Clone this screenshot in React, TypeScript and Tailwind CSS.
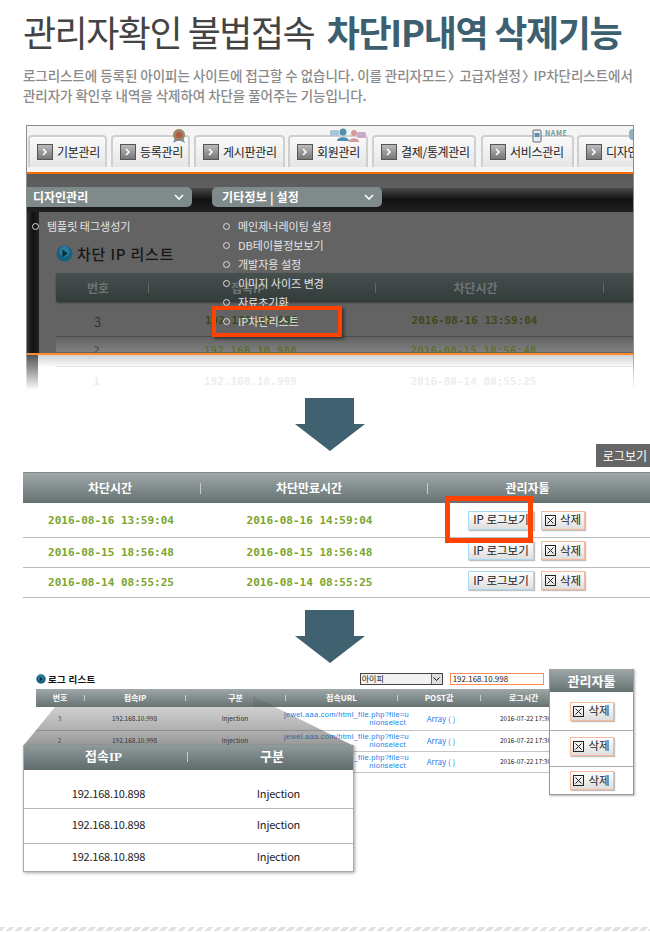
import type { ReactNode } from 'react'

const tabs = [
  { label: '기본관리', w: 'w-[79px]', ml: 'ml-[1px]' },
  { label: '등록관리', w: 'w-[79px]', ml: 'ml-[4px]' },
  { label: '게시판관리', w: 'w-[91px]', ml: 'ml-[4px]' },
  { label: '회원관리', w: 'w-[80px]', ml: 'ml-[3px]' },
  { label: '결제/통계관리', w: 'w-[104px]', ml: 'ml-[4px]' },
  { label: '서비스관리', w: 'w-[93px]', ml: 'ml-[5px]' },
  { label: '디자인관리', w: 'w-[93px]', ml: 'ml-[3px]' },
]

const rightMenu = ['메인제너레이팅 설정', 'DB테이블정보보기', '개발자용 설정', '이미지 사이즈 변경', '자료초기화', 'IP차단리스트']

const blocked = [
  ['2016-08-16 13:59:04', '2016-08-16 14:59:04'],
  ['2016-08-15 18:56:48', '2016-08-15 18:56:48'],
  ['2016-08-14 08:55:25', '2016-08-14 08:55:25'],
]

const logRows = [
  { no: '3', h: 'h-[24px]' },
  { no: '2', h: 'h-[21px]' },
  { no: '1', h: 'h-[21px]' },
]

const toolRows = ['h-[39px] border-b', 'h-[36px] border-b pb-[5px]', 'h-[27px]']

const cropRows = ['h-[39px] border-b pt-[9px]', 'h-[35px] border-b pb-[3px]', 'h-[27px] pb-[3px]']

function Chevron() {
  return (
    <svg width="10" height="6" viewBox="0 0 10 6" className="shrink-0">
      <path d="M1 1l4 4 4-4" fill="none" stroke="#fff" strokeWidth="1.6" />
    </svg>
  )
}

function TabIcon() {
  return (
    <span className="flex h-[16px] w-[16px] shrink-0 items-center justify-center border border-[#555] bg-gradient-to-b from-[#bbb] to-[#777]">
      <svg width="8" height="8" viewBox="0 0 8 8">
        <path d="M2 1l3 3-3 3" fill="none" stroke="#fff" strokeWidth="1.6" />
      </svg>
    </span>
  )
}

function XBox() {
  return (
    <svg width="11" height="11" viewBox="0 0 11 11" className="shrink-0">
      <rect x="0.5" y="0.5" width="10" height="10" fill="none" stroke="#222" />
      <path d="M2.5 2.5l6 6M8.5 2.5l-6 6" stroke="#222" />
    </svg>
  )
}

function RoundIcon({ size }: { size: number }) {
  return (
    <svg width={size} height={size} viewBox="0 0 16 16" className="shrink-0">
      <circle cx="8" cy="8" r="7.5" fill="#14607f" />
      <circle cx="8" cy="6" r="5" fill="#3a8fb0" opacity="0.55" />
      <path d="M6 4.5L11 8l-5 3.5z" fill="#0c2c3c" />
    </svg>
  )
}

function Arrow({ className }: { className: string }) {
  return (
    <svg width="70" height="53" viewBox="0 0 70 53" className={className}>
      <path d="M10 0h49v26h11L35 53 0 26h10z" fill="#3f6170" />
    </svg>
  )
}

function Bullet() {
  return <span className="h-[7px] w-[7px] shrink-0 rounded-full border-[1.5px] border-[#ddd]" />
}

function Divider({ className = 'h-[11px] bg-[#c5cccc]' }: { className?: string }) {
  return <span className={`w-px shrink-0 ${className}`} />
}

function SmallBtn({ children, tone }: { children: ReactNode; tone: 'blue' | 'orange' }) {
  return (
    <span
      className={`flex h-[19px] items-center justify-center gap-[4px] border bg-gradient-to-b from-white to-[#dedede] text-[11.5px] leading-none text-[#222] shadow-[1px_1px_1px_rgba(0,0,0,0.25)] ${
        tone === 'blue' ? 'w-[66px] border-[#a9d9f2]' : 'w-[44px] border-[#f6b99b]'
      }`}
    >
      {children}
    </span>
  )
}

function AdminScreen() {
  return (
    <div className="relative ml-[26px] h-[265px] w-[608px] border-t border-[#8c8c8c]">
      <span className="absolute inset-y-0 left-0 w-px bg-[linear-gradient(#8c8c8c_85%,#fff)]" />
      <span className="absolute inset-y-0 right-0 w-px bg-[linear-gradient(#8c8c8c_85%,#fff)]" />
      <div className="relative mx-px flex h-full flex-col overflow-hidden">
        <div className="relative flex h-[46px] shrink-0 items-end overflow-hidden bg-[#f4f4f4] pb-[5px]">
          {tabs.map((t) => (
            <div
              key={t.label}
              className={`flex h-[32px] shrink-0 items-center gap-[4px] rounded-t-[4px] border-x-2 border-t-2 border-[#cfcfcf] bg-gradient-to-b from-[#fafafa] to-[#e6e6e6] pl-[7px] text-[12px] tracking-[-0.3px] whitespace-nowrap text-[#222] ${t.w} ${t.ml}`}
            >
              <TabIcon />
              {t.label}
            </div>
          ))}
          {/* little ornaments sitting on the tabs */}
          <svg width="18" height="18" viewBox="0 0 18 18" className="absolute top-[2px] left-[143px]">
            <path d="M3 15l6-3 6 3-2-6H5z" fill="#6f97b8" />
            <circle cx="9" cy="7" r="6" fill="#9a8468" />
            <circle cx="9" cy="7" r="3" fill="#b5553f" />
          </svg>
          <svg width="36" height="16" viewBox="0 0 36 16" className="absolute top-[2px] left-[303px]">
            <rect x="0" y="2" width="9" height="6" rx="1.5" fill="#a9c6d6" />
            <circle cx="13" cy="4" r="3.5" fill="#4f8fb0" />
            <path d="M7 13c0-5 12-5 12 0z" fill="#4f8fb0" />
            <circle cx="24" cy="5" r="3" fill="#d49a9a" />
            <path d="M19 14c0-5 10-5 10 0z" fill="#d49a9a" />
            <rect x="27" y="4" width="9" height="6" rx="1.5" fill="#c9a9c9" />
          </svg>
          <svg width="10" height="14" viewBox="0 0 10 14" className="absolute top-[3px] left-[505px]">
            <rect x="1" y="1" width="8" height="12" rx="1" fill="#e6eef2" stroke="#667" />
            <rect x="2.5" y="4" width="5" height="4" fill="#5b8fb0" />
          </svg>
          <span className="absolute top-[4px] left-[518px] text-[7px] leading-none font-bold tracking-[0.6px] text-[#6d9a9a]">NAME</span>
          <span className="absolute top-[3px] right-0 h-[11px] w-[4px] rounded-l-full bg-[#8fb0bc]" />
        </div>

        <div className="h-[2px] shrink-0 bg-[#ff6a00]" />

        <div className="relative flex h-[179px] shrink-0 flex-col bg-[#636363]">
          <div className="flex h-[38px] shrink-0 flex-col bg-gradient-to-b from-[#5a5a5a] to-[#666] pt-[14px]">
            <div className="flex h-[24px] w-full bg-gradient-to-b from-[#4a4a4a] via-[#111] to-[#222]" />
          </div>
          <div className="flex flex-1">
            <div className="w-[12px] shrink-0 bg-gradient-to-r from-[#333] via-[#111] to-[#222]" />
            <div className="flex-1 rounded-tl-[8px] bg-[#636363] pt-[34px] pl-[17px]">
              <div className="flex h-[15px] items-center gap-[4px]">
                <RoundIcon size={17} />
                <span className="text-[15px] leading-none font-medium tracking-[0.8px] text-[#161616]">차단 IP 리스트</span>
              </div>
              <div className="mt-[12px] flex h-[29px] items-center rounded-l-[2px] bg-gradient-to-b from-[#46504f] to-[#343b3b] text-[12px] font-bold text-[#6e7474] shadow-[0_1px_2px_rgba(0,0,0,0.4)]">
                <span className="w-[92px] pr-[8px] text-center">번호</span>
                <Divider className="h-[10px] bg-[#666]" />
                <span className="w-[226px] pr-[28px] text-center">접속IP</span>
                <Divider className="h-[10px] bg-[#666]" />
                <span className="w-[227px] pr-[28px] text-center">차단시간</span>
                <Divider className="h-[10px] bg-[#666]" />
              </div>
              <div className="flex h-[35px] items-center border-b border-[#4b4b4b] pt-[5px] text-[#333]">
                <span className="w-[83px] text-center text-[13px]">3</span>
                <span className="w-[236px] pl-[66px] font-['DejaVu_Sans_Mono',monospace] text-[11px] font-bold text-[#3c4a17]">192.168.10.998</span>
                <span className="w-[227px] pr-[28px] text-center font-['DejaVu_Sans_Mono',monospace] text-[11px] font-bold text-[#3c4a17]">2016-08-16 13:59:04</span>
              </div>
              <div className="h-[15px] bg-gradient-to-b from-[#636363] to-[#808080]" />
            </div>
          </div>
        </div>

        <div className="relative z-20 h-[2px] shrink-0 bg-[#ff8c2e]" />

        <div className="flex flex-1 bg-gradient-to-b from-[#d0d0d0] via-white via-[35%] to-white">
          <div className="w-[11px] shrink-0 bg-gradient-to-b from-[#555] to-white" />
        </div>

        {/* faded rows run under the orange line */}
        <div className="absolute top-[211px] left-[28px] z-10 w-[579px] font-['DejaVu_Sans_Mono',monospace] text-[11px] font-bold">
          <div className="flex h-[30px] items-center border-b border-[#e5e5e5] text-[#5f7035]">
            <span className="w-[83px] text-center text-[#555]">2</span>
            <span className="w-[236px] pl-[66px]">192.168.10.988</span>
            <span className="w-[227px] pr-[28px] text-center">2016-08-15 18:56:48</span>
          </div>
          <div className="flex h-[30px] items-center text-[#ededed]">
            <span className="w-[83px] text-center">1</span>
            <span className="w-[236px] pl-[66px]">192.168.10.999</span>
            <span className="w-[227px] pr-[28px] text-center">2016-08-14 08:55:25</span>
          </div>
        </div>

        {/* open menus and the highlight box lie over the screen */}
        <div className="absolute top-[61px] left-0 z-20 flex h-[20px] w-[165px] items-center justify-between rounded-r-[5px] bg-[#7f8a8a] pr-[8px] pl-[6px] text-[12px] font-bold text-white">
          디자인관리
          <Chevron />
        </div>
        <div className="absolute top-[61px] left-[185px] z-20 flex h-[20px] w-[170px] items-center justify-between rounded-[5px] bg-[#7f8a8a] pr-[8px] pl-[10px] text-[12px] font-bold tracking-[0.2px] text-white">
          기타정보 | 설정
          <Chevron />
        </div>
        <div className="absolute top-[91px] left-[5px] z-20 flex h-[19px] items-center gap-[8px] text-[11px] text-[#e4e4e4]">
          <Bullet />
          템플릿 태그생성기
        </div>
        <div className="absolute top-[91px] left-[196px] z-20 flex flex-col text-[11px] whitespace-nowrap text-[#e4e4e4]">
          {rightMenu.map((m) => (
            <div key={m} className="flex h-[19px] items-center gap-[8px]">
              <Bullet />
              {m}
            </div>
          ))}
        </div>
        <div className="absolute top-[180px] left-[185px] z-20 h-[31px] w-[130px] border-[4px] border-[#ff4200] shadow-[2px_2px_3px_rgba(0,0,0,0.5)]" />
      </div>
    </div>
  )
}

function BlockTable() {
  return (
    <div className="relative ml-[23px] w-[627px]">
      <div className="flex h-[31px] items-center border-t border-[#7d8a8a] bg-gradient-to-b from-[#a0a8a8] to-[#667272] text-[12px] font-bold text-white">
        <span className="w-[177px] pr-[3px] text-center">차단시간</span>
        <Divider />
        <span className="w-[226px] pr-[10px] text-center">차단만료시간</span>
        <Divider />
        <span className="w-[199px] text-center">관리자툴</span>
      </div>
      {blocked.map((r, i) => (
        <div
          key={r[0]}
          className={`flex items-center border-b border-[#bbb] font-['DejaVu_Sans_Mono',monospace] text-[11px] font-bold text-[#7aa52e] ${
            i === 0 ? 'h-[35px]' : 'h-[30px]'
          }`}
        >
          <span className={`w-[174px] pl-[2px] text-center ${i === 0 ? 'pt-[3px]' : 'pt-[1px]'}`}>{r[0]}</span>
          <span className={`w-[223px] pl-[2px] text-center ${i === 0 ? 'pt-[3px]' : 'pt-[1px]'}`}>{r[1]}</span>
          <span className={`ml-[48px] flex gap-[7px] font-['Noto_Sans_CJK_KR',sans-serif] font-normal ${i === 0 ? '' : 'mb-[4px]'}`}>
            <SmallBtn tone="blue">IP 로그보기</SmallBtn>
            <SmallBtn tone="orange">
              <XBox />
              삭제
            </SmallBtn>
          </span>
        </div>
      ))}
      <div className="absolute top-[24px] left-[422px] h-[47px] w-[88px] border-[5px] border-[#ff4200]" />
    </div>
  )
}

function LogSection() {
  return (
    <div className="relative mt-[6px] ml-[23px] h-[201px] w-[611px]">
      <div className="ml-[13px] flex w-[513px] flex-col">
        <div className="flex h-[20px] items-center">
          <RoundIcon size={10} />
          <span className="ml-[2px] text-[9.5px] font-bold tracking-[0.3px] text-[#111]">로그 리스트</span>
          <div className="ml-[264px] flex h-[12px] w-[83px] items-center justify-between border border-[#444] bg-[#f2f2f2] pl-[1px] text-[8px] text-[#222]">
            아이피
            <span className="flex h-full w-[11px] items-center justify-center border-l border-[#666] bg-[#ddd]">
              <svg width="7" height="4" viewBox="0 0 7 4">
                <path d="M0.5 0.5L3.5 3.5 6.5 0.5" fill="none" stroke="#111" />
              </svg>
            </span>
          </div>
          <div className="ml-[7px] flex h-[12px] w-[94px] items-center border border-[#ff8c5a] pl-[2px] text-[8px] text-[#222]">192.168.10.998</div>
        </div>
        <div className="flex h-[18px] items-center bg-gradient-to-b from-[#a0a8a8] to-[#667272] text-[8px] font-bold text-white">
          <span className="w-[48px] text-center">번호</span>
          <Divider className="h-[6px] bg-[#c5cccc]" />
          <span className="w-[100px] text-center">접속IP</span>
          <Divider className="h-[6px] bg-[#c5cccc]" />
          <span className="w-[99px] text-center">구분</span>
          <Divider className="h-[6px] bg-[#c5cccc]" />
          <span className="w-[111px] text-center">접속URL</span>
          <Divider className="h-[6px] bg-[#c5cccc]" />
          <span className="w-[82px] text-center">POST값</span>
          <Divider className="h-[6px] bg-[#c5cccc]" />
          <span className="flex-1 pl-[28px] text-left whitespace-nowrap">로그시간</span>
        </div>
        {logRows.map((r) => (
          <div key={r.no} className={`flex items-center border-b border-[#c4c4c4] text-[6.5px] text-[#222] ${r.h}`}>
            <span className="w-[47px] shrink-0 text-center text-[#555]">{r.no}</span>
            <span className="w-[101px] shrink-0 pl-[2px] text-center">192.168.10.998</span>
            <span className="w-[100px] shrink-0 pl-[2px] text-center">Injection</span>
            <span className="w-[122px] shrink-0 text-right font-['Liberation_Sans',sans-serif] text-[7.5px] leading-[8px] tracking-[0.3px] whitespace-nowrap text-[#1b7fe8]">
              jewel.aaa.com/html_file.php?file=u
              <br />
              nionselect
            </span>
            <span className="w-[70px] shrink-0 text-center text-[8px] text-[#1b7fe8]">Array ( )</span>
            <span className="pl-[24px] whitespace-nowrap">2016-07-22 17:30</span>
          </div>
        ))}
      </div>

      {/* 관리자툴 panel and the zoomed crop lie over the log table */}
      <div className="absolute top-0 left-[526px] flex w-[85px] flex-col border-x border-b border-[#999] bg-white shadow-[1px_1px_2px_rgba(0,0,0,0.3)]">
        <div className="flex h-[23px] items-center justify-center bg-gradient-to-b from-[#a0a8a8] to-[#667272] text-[13px] font-bold text-white">관리자툴</div>
        {toolRows.map((c) => (
          <div key={c} className={`flex items-center justify-center border-[#aaa] ${c}`}>
            <SmallBtn tone="orange">
              <XBox />
              삭제
            </SmallBtn>
          </div>
        ))}
      </div>
      <svg width="331" height="50" viewBox="0 0 331 50" className="absolute top-[27px] left-0">
        <defs>
          <linearGradient id="wedge" x1="0" y1="0" x2="0" y2="1">
            <stop offset="0" stopColor="#555" stopOpacity="0.2" />
            <stop offset="1" stopColor="#444" stopOpacity="0.55" />
          </linearGradient>
        </defs>
        <path d="M32 11H230V0L331 50H0z" fill="url(#wedge)" />
      </svg>
      <div className="absolute top-[76px] left-0 flex w-[331px] flex-col border-x border-b border-[#aaa] bg-white text-[11px] tracking-[-0.2px] text-[#222] shadow-[1px_1px_3px_rgba(0,0,0,0.35)]">
        <div className="flex h-[25px] items-center bg-gradient-to-b from-[#8f9a9b] to-[#5f6b6c] pb-[2px] font-['Liberation_Serif','Noto_Sans_CJK_KR',serif] text-[13px] font-bold tracking-normal text-white">
          <span className="w-[163px] pr-[4px] text-center">접속IP</span>
          <Divider className="h-[10px] bg-[#c5cccc]" />
          <span className="w-[165px] pl-[3px] text-center">구분</span>
        </div>
        {cropRows.map((c) => (
          <div key={c} className={`flex items-center border-[#b5b5b5] ${c}`}>
            <span className="w-[169px] shrink-0 text-center">192.168.10.898</span>
            <span className="w-[160px] shrink-0 pl-[11px] text-center">Injection</span>
          </div>
        ))}
      </div>
    </div>
  )
}

export default function App() {
  return (
    <div className="h-[932px] w-[650px] overflow-hidden bg-white font-['Noto_Sans_CJK_KR','Liberation_Sans',sans-serif]">
      <div className="h-[125px] pt-[5px] pl-[23px]">
        <h1 className="text-[36px] leading-[52px] tracking-[-1.5px] whitespace-nowrap text-[#444]">
          관리자확인 불법접속 <strong className="ml-[6px] font-bold tracking-[-1.3px] text-[#3c6070]">차단IP내역 삭제기능</strong>
        </h1>
        <p className="mt-[8px] text-[13.5px] leading-[20px] font-medium tracking-[-0.05px] whitespace-nowrap text-[#8a8a8a]">
          로그리스트에 등록된 아이피는 사이트에 접근할 수 없습니다. 이를 관리자모드 <span className="-mr-[5px] -ml-[2px]">〉</span> 고급자설정 <span className="-mr-[5px] -ml-[2px]">〉</span> IP차단리스트에서
          <br />
          관리자가 확인후 내역을 삭제하여 차단을 풀어주는 기능입니다.
        </p>
      </div>

      <AdminScreen />

      <Arrow className="mt-[8px] ml-[295px]" />

      <div className="-mt-[7px] flex justify-end">
        <span className="flex h-[23px] w-[54px] items-center justify-end bg-[#666] pr-[3px] text-[12px] text-white">로그보기</span>
      </div>
      <div className="mt-[5px]">
        <BlockTable />
      </div>

      <Arrow className="mt-[12px] ml-[295px]" />

      <LogSection />

      <div className="mt-[57px] h-[4px] bg-[repeating-linear-gradient(135deg,#e2e2e2_0,#e2e2e2_4px,#fff_4px,#fff_6.4px)]" />
    </div>
  )
}
